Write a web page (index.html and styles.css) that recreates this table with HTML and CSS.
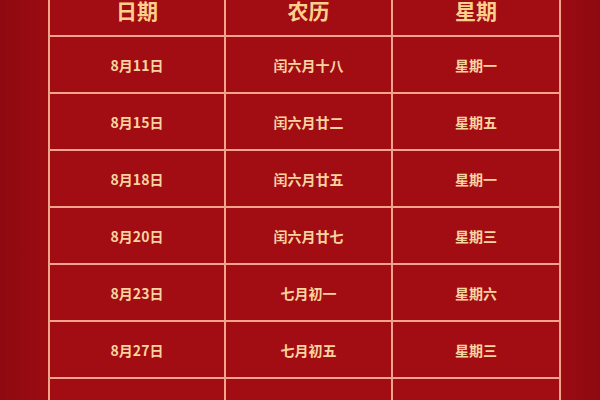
FILE: index.html
```html
<!DOCTYPE html>
<html lang="zh">
<head>
<meta charset="utf-8">
<link rel="stylesheet" href="styles.css">
</head>
<body>
<div class="page">
  <div class="table">
    <div class="cell head">日期</div>
    <div class="cell head">农历</div>
    <div class="cell head">星期</div>

    <div class="cell">8月11日</div>
    <div class="cell">闰六月十八</div>
    <div class="cell">星期一</div>

    <div class="cell">8月15日</div>
    <div class="cell">闰六月廿二</div>
    <div class="cell">星期五</div>

    <div class="cell">8月18日</div>
    <div class="cell">闰六月廿五</div>
    <div class="cell">星期一</div>

    <div class="cell">8月20日</div>
    <div class="cell">闰六月廿七</div>
    <div class="cell">星期三</div>

    <div class="cell">8月23日</div>
    <div class="cell">七月初一</div>
    <div class="cell">星期六</div>

    <div class="cell">8月27日</div>
    <div class="cell">七月初五</div>
    <div class="cell">星期三</div>

    <div class="cell">8月30日</div>
    <div class="cell">七月初八</div>
    <div class="cell">星期六</div>
  </div>
</div>
</body>
</html>
```

FILE: styles.css
```css
html, body {
  margin: 0;
  padding: 0;
  width: 600px;
  height: 400px;
  overflow: hidden;
  background: #9a0b11;
}

.page {
  padding-left: 48px;
  margin-top: -17px;
  background: linear-gradient(90deg, #8e0a10 0px, #9c0b12 48px, #9c0b12 556px, #8e0a10 600px);
}

.table {
  display: grid;
  grid-template-columns: 174px 165px 166px;
  grid-template-rows: 50px repeat(7, 55px);
  gap: 2px;
  padding: 2px;
  width: max-content;
  background: #f1a38c;
  font-family: "Noto Sans CJK SC", "Noto Sans", sans-serif;
  font-weight: 700;
}

.cell {
  display: flex;
  align-items: center;
  justify-content: center;
  background: #a20c13;
  color: #fad4a0;
  font-size: 14px;
}

.head {
  font-size: 21px;
  color: #fcd08c;
}
```
